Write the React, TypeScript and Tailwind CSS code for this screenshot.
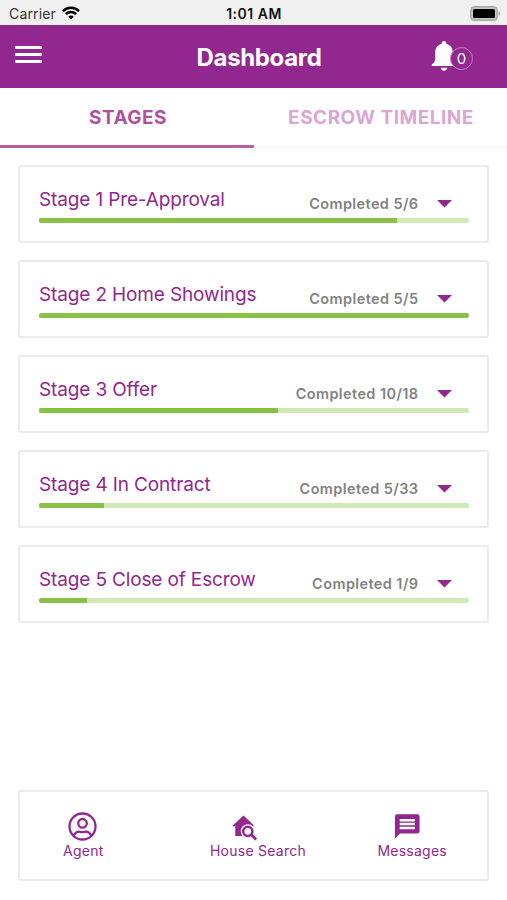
import React from "react";

type Stage = { title: string; done: number; total: number };

const stages: Stage[] = [
  { title: "Stage 1 Pre-Approval", done: 5, total: 6 },
  { title: "Stage 2 Home Showings", done: 5, total: 5 },
  { title: "Stage 3 Offer", done: 10, total: 18 },
  { title: "Stage 4 In Contract", done: 5, total: 33 },
  { title: "Stage 5 Close of Escrow", done: 1, total: 9 },
];

function StatusBar() {
  return (
    <div className="grid h-[25px] grid-cols-3 items-center bg-[#f1f1f1] pl-[9px] pr-[6px] text-[14px] leading-[24px] text-[#111]">
      <div className="flex items-center gap-[6px] pt-[2px]">
        <span className="tracking-[0.15px] text-[#333]">Carrier</span>
        <svg className="-mt-[2px]" width="18" height="14" viewBox="0 0 18 14" fill="none" stroke="#000" strokeWidth="2.5">
          <path d="M1 5.1C5.6.7 12.4.7 17 5.1" />
          <path d="M3.9 8.1c2.9-2.8 7.3-2.8 10.2 0" />
          <path d="M9 13.6 6.2 10.7c1.6-1.5 4-1.5 5.6 0z" fill="#000" stroke="none" />
        </svg>
      </div>
      <div className="pr-[2px] pt-[2px] text-center font-semibold tracking-[0.5px]">1:01 AM</div>
      <div className="flex items-center justify-end">
        <svg width="31" height="15" viewBox="0 0 31 15">
          <rect x=".8" y=".8" width="26.4" height="13.4" rx="3.6" fill="#c5c5c5" stroke="#aaa" strokeWidth="1.4" />
          <rect x="3" y="3" width="22" height="9" rx="1.5" fill="#000" />
          <path d="M28.5 5c2.4 1 2.4 4 0 5z" fill="#aaa" />
        </svg>
      </div>
    </div>
  );
}

function Header() {
  return (
    <header className="grid h-[63px] grid-cols-[1fr_auto_1fr] items-center bg-[#92278f] text-white">
      <div className="flex flex-col gap-[4px] self-start pl-[15px] pt-[21px]">
        <span className="h-[3px] w-[27px] rounded-[1px] bg-white" />
        <span className="h-[3px] w-[27px] rounded-[1px] bg-white" />
        <span className="h-[3px] w-[27px] rounded-[1px] bg-white" />
      </div>
      <h1 className="pl-[11px] pt-[2px] text-[24px] font-bold leading-[30px] tracking-[-0.35px]">Dashboard</h1>
      <div className="flex items-center justify-end self-start pr-[34px] pt-[16px]">
        <svg width="26" height="30" viewBox="0 0 26 30" fill="#fff">
          <path d="M13 0c-1.300 0-2.200.9-2.200 2.200v.6C6.700 3.800 4.200 7.200 4.200 11.500v6.300c0 2.400-.9 3.600-3.400 5.600v1.600h24.400v-1.600c-2.500-2-3.400-3.200-3.400-5.600v-6.300c0-4.300-2.500-7.700-6.600-8.700v-.6C15.200.9 14.300 0 13 0z" />
          <path d="M9.800 26.800h6.400c-.2 1.800-1.500 3-3.200 3s-3-1.200-3.200-3z" />
        </svg>
        <span className="relative -ml-[7px] mt-[5px] flex h-[23px] w-[23px] items-center justify-center rounded-full border border-[#c77fc5] bg-[#92278f] text-[15px] leading-none">
          0
        </span>
      </div>
    </header>
  );
}

function Tabs() {
  return (
    <nav className="grid h-[60px] grid-cols-[254px_253px] text-[19px] font-bold leading-[22px]">
      <div className="border-b-[3px] border-[#b95caa] pl-[2px] pt-[19px] text-center tracking-[0.5px] text-[#b1509f]">STAGES</div>
      <div className="border-b border-[#f3f1f3] pl-[1px] pt-[19px] text-center tracking-[0.5px] text-[#dba7d2]">ESCROW TIMELINE</div>
    </nav>
  );
}

function StageCard({ title, done, total }: Stage) {
  return (
    <section className="h-[78px] rounded-[3px] border-2 border-[#e9ebec] pl-[19px] pr-[18px] pt-[21px]">
      <div className="flex h-[30px] items-start whitespace-nowrap">
        <h2 className="flex-1 text-[19px] leading-[24px] tracking-[-0.14px] text-[#92278f]">{title}</h2>
        <span className="pt-[6px] text-[14.5px] font-semibold leading-[20px] tracking-[0.4px] text-[#828282]">
          Completed {done}/{total}
        </span>
        <svg className="ml-[18px] mr-[17.5px] mt-[12px]" width="15" height="8" viewBox="0 0 15 8">
          <path d="M0 0h15L7.500 7.500z" fill="#92278f" />
        </svg>
      </div>
      <div className="h-[4.500px] overflow-hidden rounded-[2px] bg-[#d1e8b7]">
        <div className="h-full bg-[#89c147]" style={{ width: `${(done / total) * 100}%` }} />
      </div>
    </section>
  );
}

function BottomNav() {
  const label = "text-[14px] leading-[18px] tracking-[0.25px]";
  return (
    <nav className="mx-[18px] mt-auto mb-[19px] flex h-[91px] justify-between rounded-[3px] border-2 border-[#e9ebec] pl-[43px] pr-[40px] pt-[20px] text-[#92278f]">
      <div className="flex flex-col items-center">
        <svg className="h-[30px] w-[30px]" viewBox="0 0 30 30" fill="none" stroke="#92278f" strokeWidth="2.300">
          <circle cx="14.500" cy="14.500" r="13" />
          <circle cx="14.500" cy="11.300" r="4.300" />
          <path d="M5.500 23.500c2-3 5-4 6.500-3.700 1.700.4 3.300.4 5 0 1.500-.3 4.500.7 6.500 3.700" />
        </svg>
        <span className={label}>Agent</span>
      </div>
      <div className="ml-[35px] flex flex-col items-center">
        <svg className="mr-[28px] h-[30px] w-[30px]" viewBox="0 0 30 30">
          <path d="M14.500 3.500 3 14.200h3.300V24h9L24.800 13.200z" fill="#92278f" />
          <circle cx="18.800" cy="19.300" r="7" fill="#fff" />
          <circle cx="18.800" cy="19.300" r="4.600" fill="#fff" stroke="#92278f" strokeWidth="2.500" />
          <path d="m22.100 22.600 5 5" stroke="#92278f" strokeWidth="2.800" />
        </svg>
        <span className={label}>House Search</span>
      </div>
      <div className="flex flex-col items-center">
        <svg className="mr-[10px] h-[30px] w-[30px]" viewBox="0 0 30 30">
          <path d="M5.300 2.300h19.900a2.400 2.400 0 0 1 2.400 2.400v14.500a2.400 2.400 0 0 1-2.400 2.400H8l-5.100 4.900V4.700a2.400 2.400 0 0 1 2.400-2.400z" fill="#92278f" />
          <path d="M7.700 8.200h15.200M7.700 12.100h15.200M7.700 16h15.200" stroke="#fff" strokeWidth="2.500" />
        </svg>
        <span className={label}>Messages</span>
      </div>
    </nav>
  );
}

export default function App() {
  return (
    <div className="flex h-[900px] w-[507px] flex-col bg-white font-['Inter','Liberation_Sans',sans-serif]">
      <StatusBar />
      <Header />
      <Tabs />
      <main className="flex flex-col gap-[17px] px-[18px] pt-[17px]">
        {stages.map((stage) => (
          <StageCard key={stage.title} {...stage} />
        ))}
      </main>
      <BottomNav />
    </div>
  );
}
